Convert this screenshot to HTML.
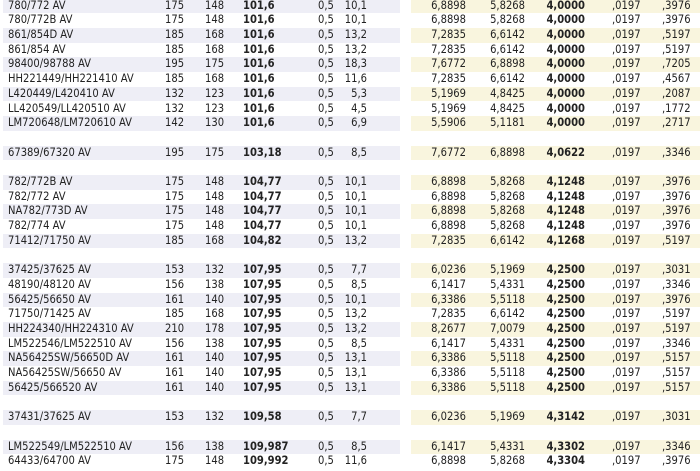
<!DOCTYPE html>
<html><head><meta charset="utf-8"><style>
body{margin:0;width:700px;height:471px;overflow:hidden;background:#fff;font-family:"DejaVu Sans Condensed","Liberation Sans",sans-serif;font-size:11.1px;color:#222;}
.r{position:absolute;left:0;width:700px;height:14.7px;line-height:14.7px;}
.r.s .l{position:absolute;left:3px;width:397px;top:0;height:100%;background:#eeeef6;}
.r.s .c{position:absolute;left:411px;width:289px;top:0;height:100%;background:#f9f5de;}
.r span{position:absolute;top:0;white-space:nowrap;}
.a{left:8px}.b{left:165px}.d{left:205px}.e{left:243px;font-weight:bold}.f{left:318px}
.g{right:333px}.h{right:234px}.i{right:175px}.j{right:115px;font-weight:bold}.k{left:612px}.m{left:662px}
</style></head><body>
<div id="t"></div>
<script>
var rows=[
["780/772 AV",175,148,"101,6","10,1","6,8898","5,8268","4,0000",",3976"],
["780/772B AV",175,148,"101,6","10,1","6,8898","5,8268","4,0000",",3976"],
["861/854D AV",185,168,"101,6","13,2","7,2835","6,6142","4,0000",",5197"],
["861/854 AV",185,168,"101,6","13,2","7,2835","6,6142","4,0000",",5197"],
["98400/98788 AV",195,175,"101,6","18,3","7,6772","6,8898","4,0000",",7205"],
["HH221449/HH221410 AV",185,168,"101,6","11,6","7,2835","6,6142","4,0000",",4567"],
["L420449/L420410 AV",132,123,"101,6","5,3","5,1969","4,8425","4,0000",",2087"],
["LL420549/LL420510 AV",132,123,"101,6","4,5","5,1969","4,8425","4,0000",",1772"],
["LM720648/LM720610 AV",142,130,"101,6","6,9","5,5906","5,1181","4,0000",",2717"],
null,
["67389/67320 AV",195,175,"103,18","8,5","7,6772","6,8898","4,0622",",3346"],
null,
["782/772B AV",175,148,"104,77","10,1","6,8898","5,8268","4,1248",",3976"],
["782/772 AV",175,148,"104,77","10,1","6,8898","5,8268","4,1248",",3976"],
["NA782/773D AV",175,148,"104,77","10,1","6,8898","5,8268","4,1248",",3976"],
["782/774 AV",175,148,"104,77","10,1","6,8898","5,8268","4,1248",",3976"],
["71412/71750 AV",185,168,"104,82","13,2","7,2835","6,6142","4,1268",",5197"],
null,
["37425/37625 AV",153,132,"107,95","7,7","6,0236","5,1969","4,2500",",3031"],
["48190/48120 AV",156,138,"107,95","8,5","6,1417","5,4331","4,2500",",3346"],
["56425/56650 AV",161,140,"107,95","10,1","6,3386","5,5118","4,2500",",3976"],
["71750/71425 AV",185,168,"107,95","13,2","7,2835","6,6142","4,2500",",5197"],
["HH224340/HH224310 AV",210,178,"107,95","13,2","8,2677","7,0079","4,2500",",5197"],
["LM522546/LM522510 AV",156,138,"107,95","8,5","6,1417","5,4331","4,2500",",3346"],
["NA56425SW/56650D AV",161,140,"107,95","13,1","6,3386","5,5118","4,2500",",5157"],
["NA56425SW/56650 AV",161,140,"107,95","13,1","6,3386","5,5118","4,2500",",5157"],
["56425/566520 AV",161,140,"107,95","13,1","6,3386","5,5118","4,2500",",5157"],
null,
["37431/37625 AV",153,132,"109,58","7,7","6,0236","5,1969","4,3142",",3031"],
null,
["LM522549/LM522510 AV",156,138,"109,987","8,5","6,1417","5,4331","4,3302",",3346"],
["64433/64700 AV",175,148,"109,992","11,6","6,8898","5,8268","4,3304",",3976"]
];
var h="",k=0;
rows.forEach(function(r,i){
 var top=(i*14.7-1.4).toFixed(1);
 if(!r){k=0;return;}
 var s=(k%2==0)?" s":"";k++;
 h+='<div class="r'+s+'" style="top:'+top+'px"><div class="l"></div><div class="c"></div>'+
 '<span class="a">'+r[0]+'</span><span class="b">'+r[1]+'</span><span class="d">'+r[2]+'</span><span class="e">'+r[3]+'</span><span class="f">0,5</span><span class="g">'+r[4]+'</span>'+
 '<span class="h">'+r[5]+'</span><span class="i">'+r[6]+'</span><span class="j">'+r[7]+'</span><span class="k">,0197</span><span class="m">'+r[8]+'</span></div>';
});
document.getElementById("t").innerHTML=h;
</script>
</body></html>
